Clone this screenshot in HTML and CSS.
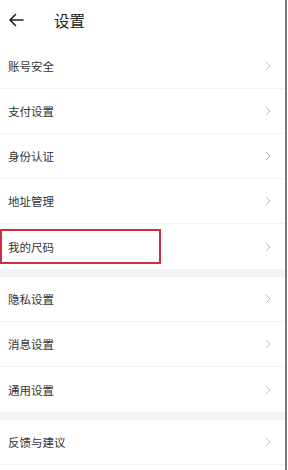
FILE: index.html
```html
<!DOCTYPE html>
<html lang="zh-CN">
<head>
  <meta charset="UTF-8" />
  <meta name="viewport" content="width=device-width, initial-scale=1.0" />
  <title>设置</title>
  <link rel="stylesheet" href="styles.css">
</head>
<body>
  <div class="page">
    <div class="header">
      <svg class="back" width="16" height="14" viewBox="0 0 16 14">
        <path d="M15 7H2M7.5 1.5L2 7l5.5 5.5" fill="none" stroke="#222" stroke-width="1.6" stroke-linecap="round" stroke-linejoin="round"/>
      </svg>
      <div class="title">设置</div>
    </div>

    <div class="group">
      <div class="row"><span>账号安全</span><svg class="arrow" width="6" height="10" viewBox="0 0 6 10"><path d="M1 1l4 4-4 4" /></svg></div>
      <div class="row"><span>支付设置</span><svg class="arrow" width="6" height="10" viewBox="0 0 6 10"><path d="M1 1l4 4-4 4" /></svg></div>
      <div class="row"><span>身份认证</span><svg class="arrow" width="6" height="10" viewBox="0 0 6 10"><path d="M1 1l4 4-4 4" /></svg></div>
      <div class="row"><span>地址管理</span><svg class="arrow" width="6" height="10" viewBox="0 0 6 10"><path d="M1 1l4 4-4 4" /></svg></div>
      <div class="row">
        <span>我的尺码</span><svg class="arrow" width="6" height="10" viewBox="0 0 6 10"><path d="M1 1l4 4-4 4" /></svg>
        <div class="mark"></div>
      </div>
    </div>

    <div class="group">
      <div class="row"><span>隐私设置</span><svg class="arrow" width="6" height="10" viewBox="0 0 6 10"><path d="M1 1l4 4-4 4" /></svg></div>
      <div class="row"><span>消息设置</span><svg class="arrow" width="6" height="10" viewBox="0 0 6 10"><path d="M1 1l4 4-4 4" /></svg></div>
      <div class="row"><span>通用设置</span><svg class="arrow" width="6" height="10" viewBox="0 0 6 10"><path d="M1 1l4 4-4 4" /></svg></div>
    </div>

    <div class="group">
      <div class="row last"><span>反馈与建议</span><svg class="arrow" width="6" height="10" viewBox="0 0 6 10"><path d="M1 1l4 4-4 4" /></svg></div>
    </div>
  </div>
</body>
</html>
```

FILE: styles.css
```css
html, body {
  margin: 0;
  padding: 0;
  background: #fff;
  font-family: "Noto Sans CJK SC", "Noto Sans", sans-serif;
  color: #333;
  overflow: hidden;
}

.page {
  width: 285px;
  height: 470px;
  border-right: 2px solid #7a7a7a;
  background: #fff;
}

.header {
  height: 44px;
  display: flex;
  align-items: center;
  padding-left: 8px;
  box-sizing: border-box;
}

.back {
  margin-top: -4px;
}

.title {
  font-size: 15.5px;
  color: #222;
  margin-left: 30px;
  margin-top: -4px;
}

.group + .group {
  border-top: 8px solid #f4f4f7;
}

.row {
  position: relative;
  height: 45px;
  box-sizing: border-box;
  border-bottom: 1px solid #f3f3f3;
  display: flex;
  align-items: center;
  justify-content: space-between;
  padding: 0 14px 0 8px;
  font-size: 11.5px;
}

.group .row:last-child {
  border-bottom: none;
}

.group .row.last {
  border-bottom: 1px solid #f3f3f3;
}

.arrow path {
  fill: none;
  stroke: #bdbdbd;
  stroke-width: 1;
}

.mark {
  position: absolute;
  left: 0;
  top: 5px;
  width: 161px;
  height: 35px;
  box-sizing: border-box;
  border: 2px solid #c8323e;
}
```
